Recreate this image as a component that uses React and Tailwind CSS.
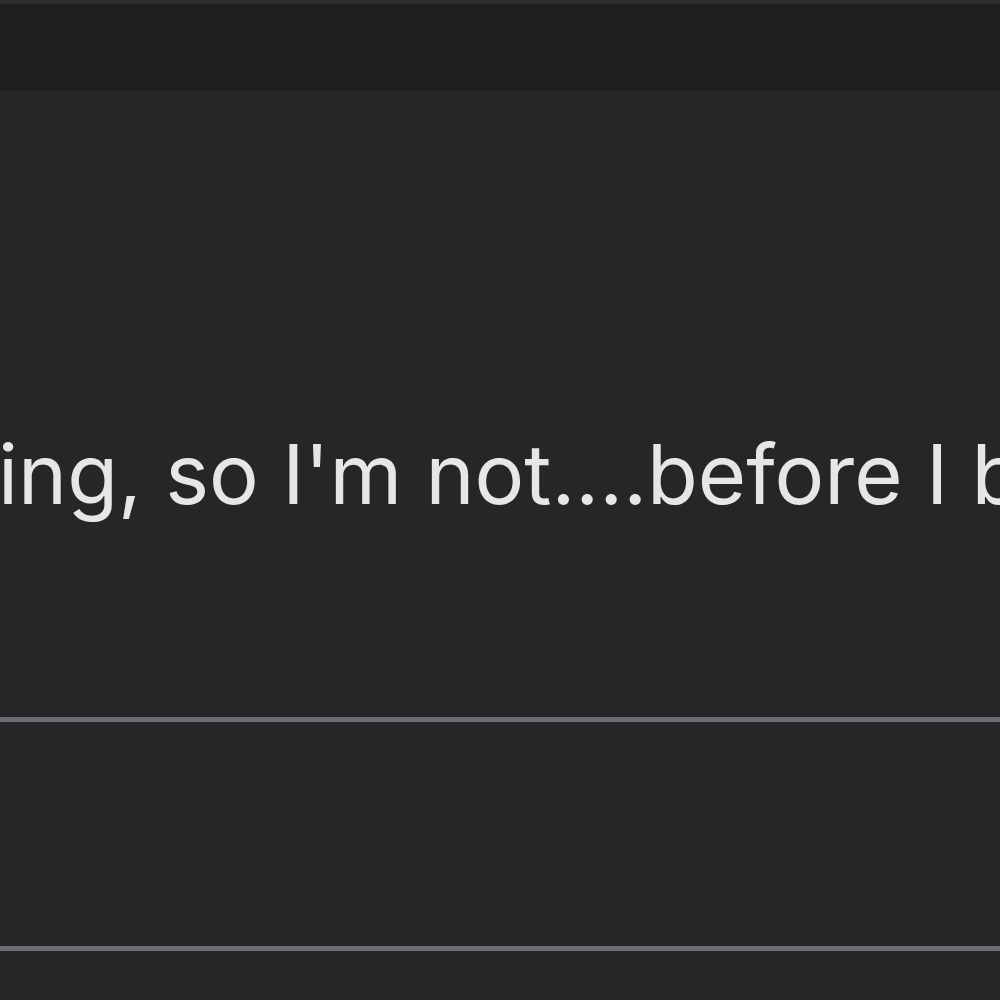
export default function App() {
  return (
    <div className="w-[1000px] h-[1000px] overflow-hidden bg-[#252628] flex flex-col" style={{ fontFamily: "Inter, 'Noto Sans', sans-serif" }}>
      <div className="h-[4px] bg-[#2b2c2e]" />
      <div className="h-[87px] bg-[#1e1e1f]" />
      <div className="h-[626px] flex items-center overflow-hidden">
        <p className="whitespace-nowrap text-[83px] leading-none text-[#e6e6e6] -ml-[2px] mt-[141px]">
          ing, so I'm not....before I b
        </p>
      </div>
      <div className="h-[5px] bg-[#6c6d70]" />
      <div className="h-[224px]" />
      <div className="h-[5px] bg-[#6c6d70]" />
      <div className="flex-1" />
    </div>
  );
}
